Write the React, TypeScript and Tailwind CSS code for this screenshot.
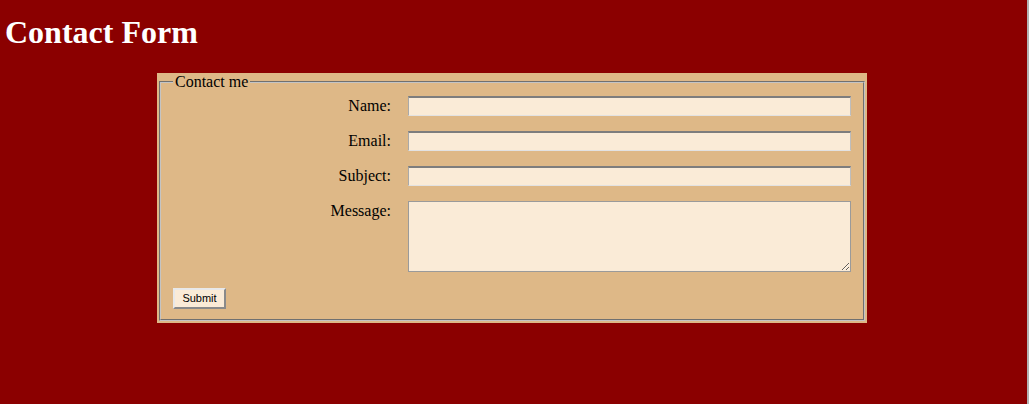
import React from "react";

const serif = { fontFamily: '"Liberation Serif", "Times New Roman", serif' };

function Row({ label, children }: { label: string; children: React.ReactNode }) {
  return (
    <div className="flex items-start gap-[17px]">
      <label className="w-[218px] text-right text-[16px] leading-[18px] pt-[1px] text-black">{label}</label>
      {children}
    </div>
  );
}

const inputCls =
  "block w-[443px] h-[20px] bg-[#FAEBD7] border border-t-2 border-t-[#7d7d7d] border-l-[#a9a9a9] border-r-[#bdbdbd] border-b-[#e2e2e2] outline-none";

export default function App() {
  return (
    <div className="flex min-h-screen h-[404px] bg-[#8B0000]" style={serif}>
      <div className="flex-1 min-w-0">
        <h1 className="text-white font-bold text-[32px] leading-[37px] pt-[14px] pl-[5px]">Contact Form</h1>
        <div className="mt-[22px] ml-[157px] w-[710px] bg-[#DEB887] pb-[2px]">
          <fieldset className="mx-[2px] border-2 [border-style:groove] border-[#c4c4c4] px-3 pt-[5px] pb-[10px]">
            <legend className="px-[2px] text-[16px] leading-[18px] text-black">Contact me</legend>
            <div className="flex flex-col gap-[15px]">
              <Row label="Name:">
                <input type="text" className={inputCls} />
              </Row>
              <Row label="Email:">
                <input type="text" className={inputCls} />
              </Row>
              <Row label="Subject:">
                <input type="text" className={inputCls} />
              </Row>
              <Row label="Message:">
                <textarea className="block w-[443px] h-[71px] bg-[#FAEBD7] border border-[#9a9a9a] outline-none resize" />
              </Row>
            </div>
            <button
              type="button"
              className="mt-[16px] block w-[53px] h-[21px] bg-[#FAEBD7] border-2 border-t-[#e8e8e8] border-l-[#e8e8e8] border-r-[#8a8a8a] border-b-[#8a8a8a] text-[11px] leading-[15px] text-black"
              style={{ fontFamily: '"Liberation Sans", Arial, sans-serif' }}
            >
              Submit
            </button>
          </fieldset>
        </div>
      </div>
      <div className="w-[2px] bg-[#b4b4b4]" />
    </div>
  );
}
